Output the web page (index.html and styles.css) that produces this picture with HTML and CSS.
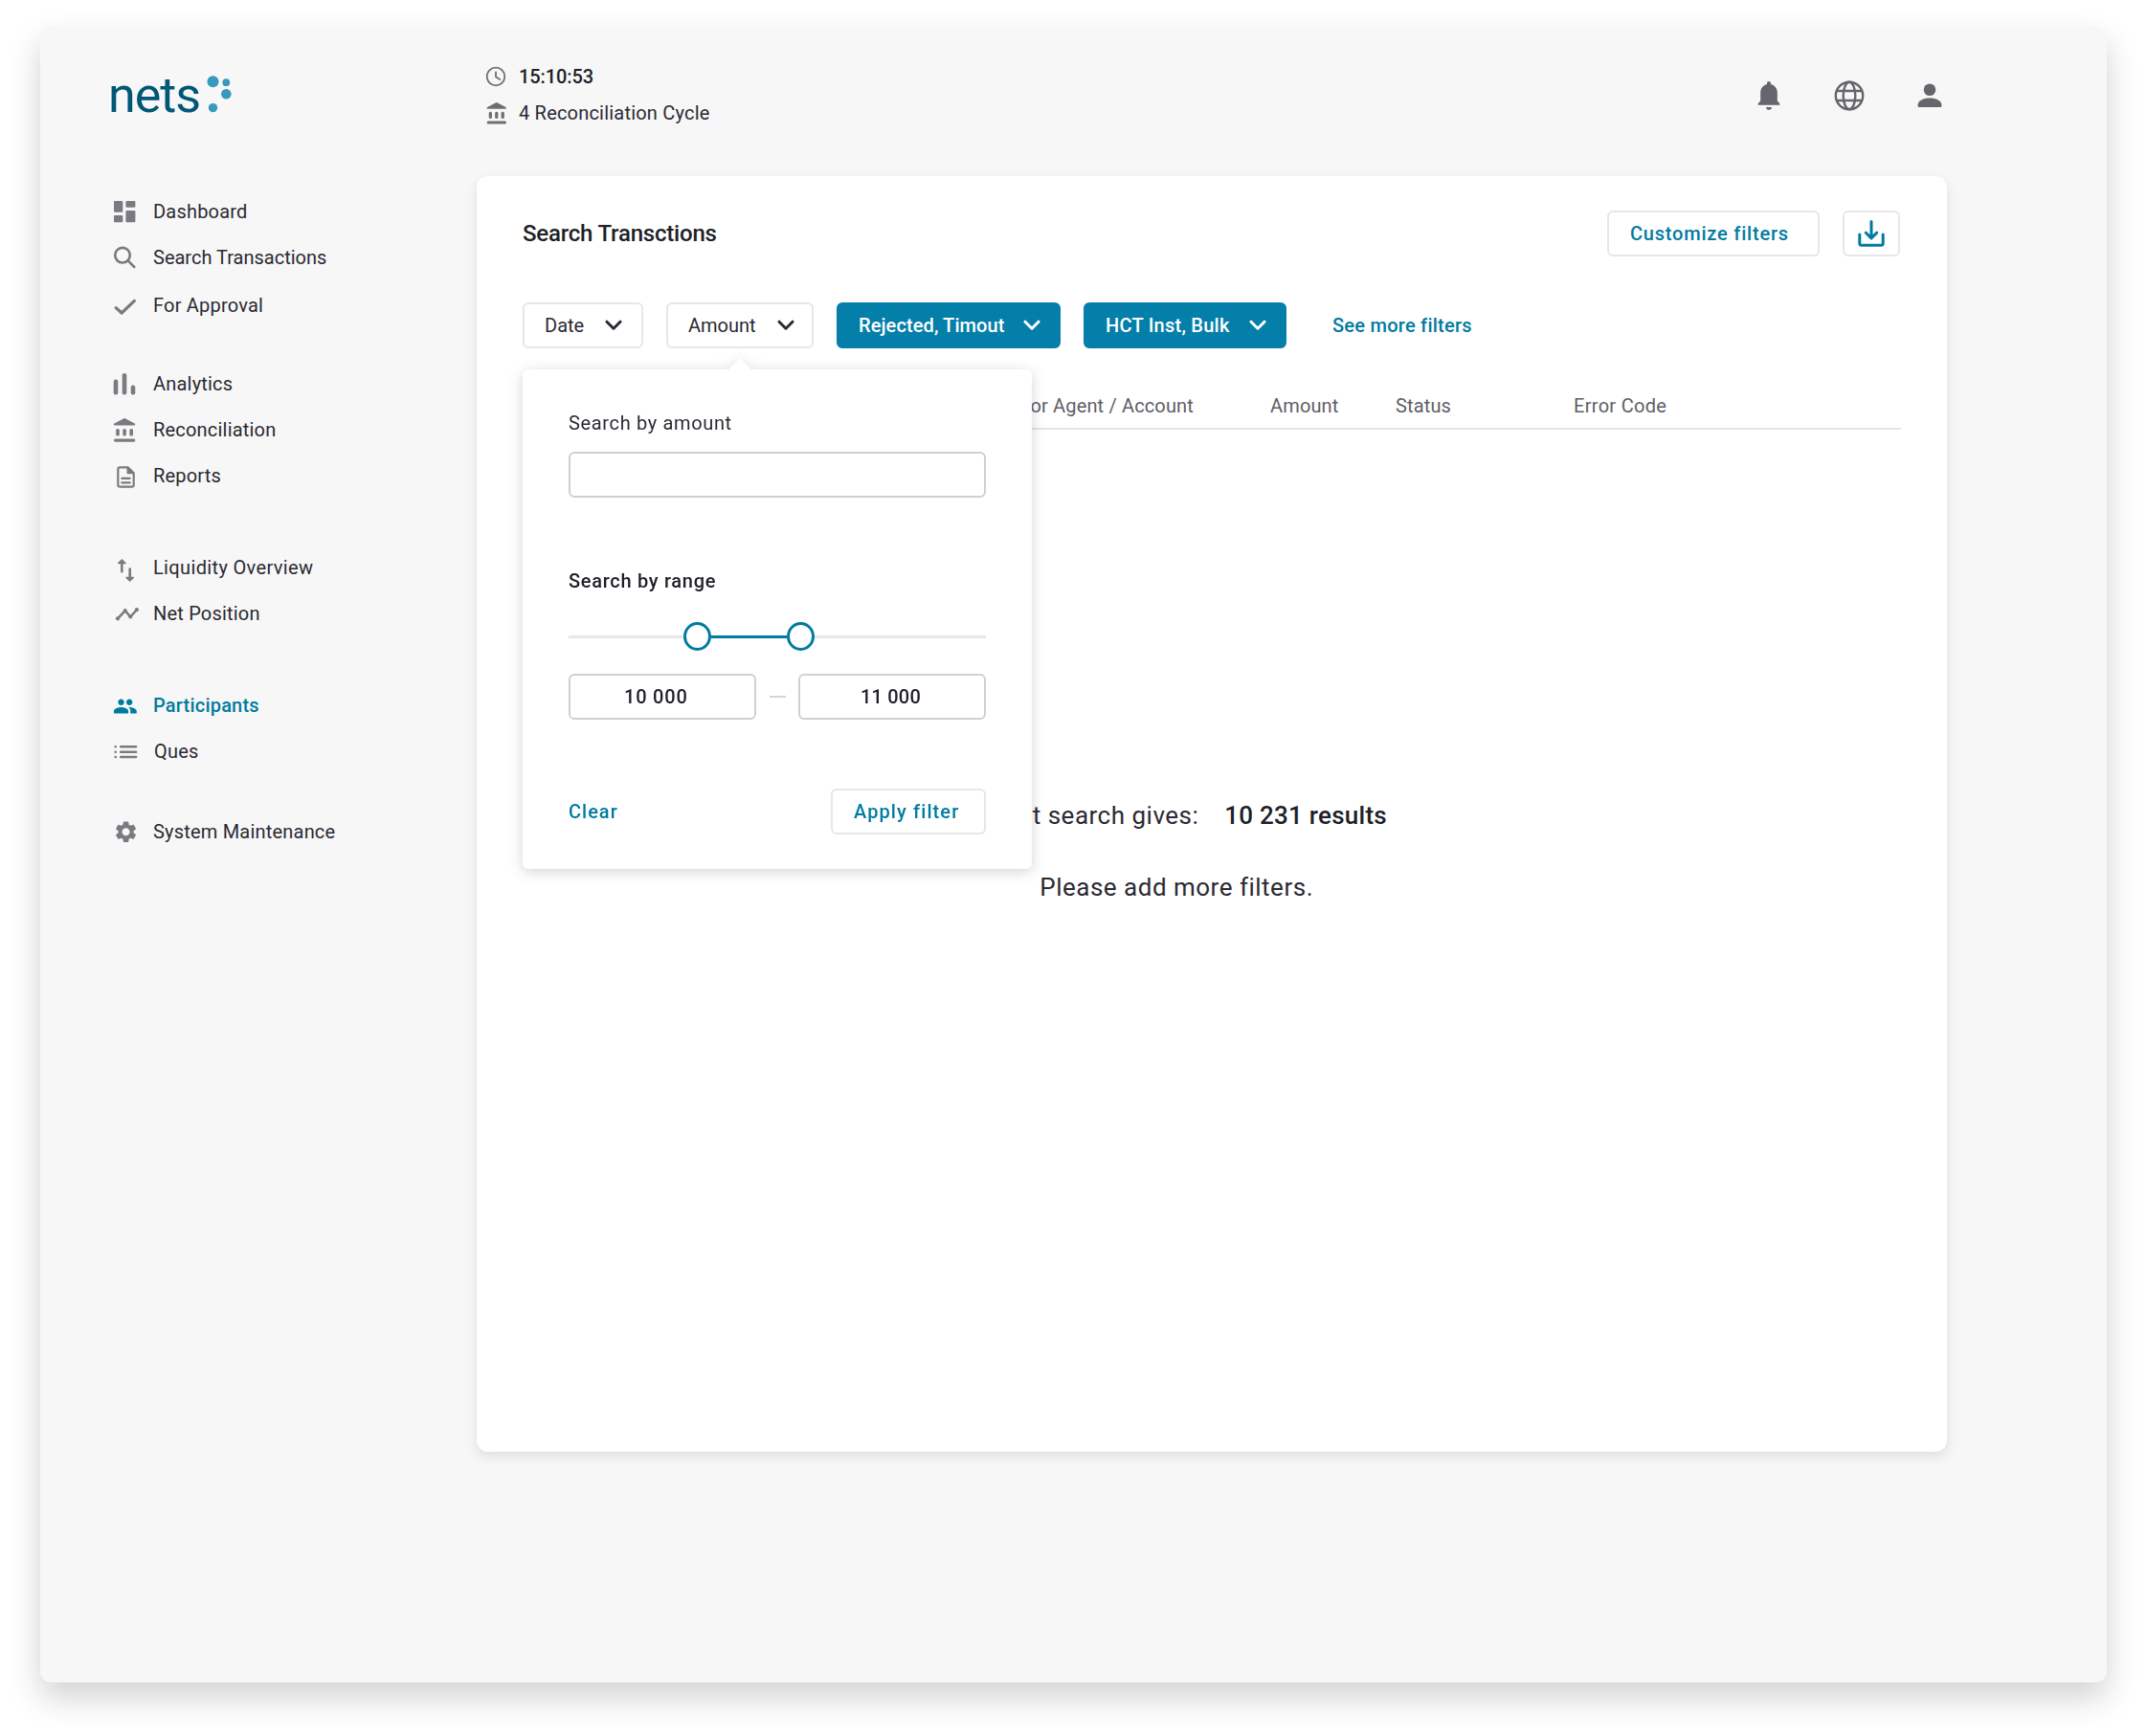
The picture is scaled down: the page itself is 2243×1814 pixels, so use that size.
FILE: index.html
```html
<!DOCTYPE html>
<html lang="en">
<head>
    <meta charset="UTF-8">
    <title>Search Transactions | Nets</title>
    <link rel="stylesheet" href="styles.css">
</head>
<body>
<div class="window">
    <aside class="sidebar">
        <div class="logo">
            <span class="logo-text">nets</span>
            <svg class="logo-dots" width="26" height="40" viewBox="0 0 26 40">
                <circle cx="6.5" cy="6.3" r="6"/>
                <circle cx="20.3" cy="7.2" r="3.9"/>
                <circle cx="20.3" cy="19.2" r="5.3"/>
                <circle cx="6.5" cy="33.6" r="4.7"/>
            </svg>
        </div>

        <nav class="nav">
            <div class="nav-group">
                <a class="nav-item">
                    <svg class="nav-icon" viewBox="0 0 30 30"><rect x="4" y="4" width="9.3" height="11.8" rx="1"/><rect x="16.4" y="4" width="10" height="6.8" rx="1"/><rect x="4" y="19" width="9.3" height="7.3" rx="1"/><rect x="16.4" y="14" width="10" height="12.3" rx="1"/></svg>
                    Dashboard
                </a>
                <a class="nav-item search">
                    <svg class="nav-icon line" viewBox="0 0 30 30"><circle cx="13" cy="12.7" r="7.8"/><path d="M18.7 18.4l6.6 6.6"/></svg>
                    Search Transactions
                </a>
                <a class="nav-item approval">
                    <svg class="nav-icon line thick" viewBox="0 0 30 30"><path d="M6.2 17.6l5.9 5.4L25.4 10.4"/></svg>
                    For Approval
                </a>
            </div>
            <div class="nav-group">
                <a class="nav-item">
                    <svg class="nav-icon" viewBox="0 0 30 30"><rect x="3.7" y="10.6" width="4.6" height="16" rx="2.3"/><rect x="12.7" y="4" width="4.6" height="22.6" rx="2.3"/><rect x="21.7" y="16.5" width="4.6" height="10.1" rx="2.3"/></svg>
                    Analytics
                </a>
                <a class="nav-item">
                    <svg class="nav-icon" viewBox="0 0 30 30"><path d="M14.4 3.3q.7-.4 1.4 0l9.9 5.3c1.1.7.6 2-.5 2H4.9c-1.1 0-1.6-1.3-.5-2z"/><rect x="6.2" y="14" width="3.6" height="7.6" rx="1.7"/><rect x="13.3" y="14" width="3.6" height="7.6" rx="1.7"/><rect x="20.4" y="14" width="3.6" height="7.6" rx="1.7"/><rect x="3.9" y="24.4" width="22.5" height="3.4" rx="1.7"/></svg>
                    Reconciliation
                </a>
                <a class="nav-item">
                    <svg class="nav-icon line thin" viewBox="0 0 30 30"><path d="M10.3 6.4h8.4l6 6v12.3a2 2 0 0 1-2 2H10.3a2 2 0 0 1-2-2V8.4a2 2 0 0 1 2-2zM12.3 17.8h8.4M12.3 22.4h8.4"/><path class="solid" d="M18.2 6.6v6h6z"/></svg>
                    Reports
                </a>
            </div>
            <div class="nav-group">
                <a class="nav-item liquidity">
                    <svg class="nav-icon line" viewBox="0 0 30 30"><path d="M12.3 19.2V8M20.7 16.6v11"/><path class="solid" d="M8.6 10.6l3.7-3.7 3.7 3.7zM17 25.4l3.7 3.7 3.7-3.7z"/></svg>
                    Liquidity Overview
                </a>
                <a class="nav-item">
                    <svg class="nav-icon line" viewBox="0 0 30 30"><path d="M8 20.3l7.7-8.2 5.6 6.4L28 11"/><circle class="dot" cx="8" cy="20.3" r="2.1"/><circle class="dot" cx="15.7" cy="12" r="2"/><circle class="dot" cx="21.3" cy="18.5" r="2"/><circle class="dot" cx="27.9" cy="11.1" r="2.1"/></svg>
                    Net Position
                </a>
            </div>
            <div class="nav-group">
                <a class="nav-item active">
                    <svg class="nav-icon" viewBox="0 0 30 30"><path transform="translate(2.9 3) scale(1.08)" d="M16 11c1.66 0 2.99-1.34 2.99-3S17.66 5 16 5c-1.66 0-3 1.34-3 3s1.34 3 3 3zm-8 0c1.66 0 2.99-1.34 2.99-3S9.66 5 8 5C6.34 5 5 6.34 5 8s1.34 3 3 3zm0 2c-2.33 0-7 1.17-7 3.5V19h14v-2.5c0-2.33-4.67-3.5-7-3.5zm8 0c-.29 0-.62.02-.97.05 1.16.84 1.97 1.97 1.97 3.45V19h6v-2.5c0-2.33-4.67-3.5-7-3.5z"/></svg>
                    Participants
                </a>
                <a class="nav-item ques">
                    <svg class="nav-icon line" viewBox="0 0 30 30"><path d="M11.2 10.3h15.9M11.2 15.7h15.9M11.2 21h15.9M5.7 10.3h.01M5.7 15.7h.01M5.7 21h.01"/></svg>
                    Ques
                </a>
            </div>
            <div class="nav-group">
                <a class="nav-item">
                    <svg class="nav-icon" viewBox="0 0 30 30"><path transform="translate(3.1 1.8) scale(1.12)" d="M19.14 12.94c.04-.3.06-.61.06-.94 0-.32-.02-.64-.07-.94l2.03-1.58c.18-.14.23-.41.12-.61l-1.92-3.32c-.12-.22-.37-.29-.59-.22l-2.39.96c-.5-.38-1.03-.7-1.62-.94l-.36-2.54c-.04-.24-.24-.41-.48-.41h-3.84c-.24 0-.43.17-.47.41l-.36 2.54c-.59.24-1.13.57-1.62.94l-2.39-.96c-.22-.08-.47 0-.59.22L2.74 8.87c-.12.21-.08.47.12.61l2.03 1.58c-.05.3-.09.63-.09.94s.02.64.07.94l-2.03 1.58c-.18.14-.23.41-.12.61l1.92 3.32c.12.22.37.29.59.22l2.39-.96c.5.38 1.03.7 1.62.94l.36 2.54c.05.24.24.41.48.41h3.84c.24 0 .44-.17.47-.41l.36-2.54c.59-.24 1.13-.56 1.62-.94l2.39.96c.22.08.47 0 .59-.22l1.92-3.32c.12-.22.07-.47-.12-.61l-2.01-1.58zM12 15.6c-1.98 0-3.6-1.62-3.6-3.6s1.62-3.6 3.6-3.6 3.6 1.62 3.6 3.6-1.62 3.6-3.6 3.6z"/></svg>
                    System Maintenance
                </a>
            </div>
        </nav>
    </aside>

    <div class="content">
        <header class="topbar">
            <div class="cycle">
                <div class="cycle-row time">
                    <svg class="cycle-icon clock" viewBox="0 0 24 24"><circle cx="12" cy="12" r="9.3"/><path d="M12 7.3v5l4.2 2.8"/></svg>
                    15:10:53
                </div>
                <div class="cycle-row">
                    <svg class="cycle-icon" viewBox="1 2 26.5 26.5"><path d="M14.4 3.3q.7-.4 1.4 0l9.9 5.3c1.1.7.6 2-.5 2H4.9c-1.1 0-1.6-1.3-.5-2z"/><rect x="6.2" y="14" width="3.6" height="8" rx="1.7"/><rect x="13.3" y="14" width="3.6" height="8" rx="1.7"/><rect x="20.4" y="14" width="3.6" height="8" rx="1.7"/><rect x="3.9" y="24.6" width="22.5" height="3.4" rx="1.7"/></svg>
                    4 Reconciliation Cycle
                </div>
            </div>
            <div class="top-icons">
                <svg width="24" height="32" viewBox="0 0 24 32"><path d="M12 1c-1.3 0-2 .9-2 2v1.1C5.7 5.2 3.2 8.7 3.2 13v8.4L.7 24.3v1.5h22.6v-1.5l-2.500-2.900V13c0-4.300-2.500-7.800-6.800-8.900V3c0-1.100-.7-2-2-2z"/><path d="M9 27.900h6c0 1.700-1.300 2.900-3 2.900s-3-1.200-3-2.900z"/></svg>
                <svg class="globe" width="32" height="32" viewBox="0 0 32 32"><circle cx="16" cy="16" r="14.2"/><ellipse cx="16" cy="16" rx="6.3" ry="14.2"/><path d="M3 11h26M3 21h26"/></svg>
                <svg width="26" height="32" viewBox="0 0 26 32"><circle cx="13" cy="9.8" r="6.3"/><path d="M.5 26.2c0-5.3 6-7.8 12.5-7.8s12.5 2.5 12.5 7.8c0 1.100-.6 1.800-1.700 1.800H2.200C1.100 28 .5 27.300.5 26.200z"/></svg>
            </div>
        </header>

        <main class="panel">
            <div class="panel-head">
                <h1 class="panel-title">Search Transctions</h1>
                <div class="panel-actions">
                    <button class="btn customize">Customize filters</button>
                    <button class="btn download">
                        <svg width="28" height="28" viewBox="0 0 28 28"><path d="M14 1.600v17M8.300 13.200l5.700 5.700 5.700-5.700M1.800 15v9.200a2 2 0 0 0 2 2h20.400a2 2 0 0 0 2-2V15"/></svg>
                    </button>
                </div>
            </div>

            <div class="filters">
                <button class="filter">Date <svg class="chevron" viewBox="0 0 18 12"><path d="M2 2.200l7 7 7-7"/></svg></button>
                <div class="filter-wrap">
                    <button class="filter">Amount <svg class="chevron" viewBox="0 0 18 12"><path d="M2 2.200l7 7 7-7"/></svg></button>

                    <!-- Amount dropdown -->
                    <div class="popover">
                        <label class="field-label" for="amount">Search by amount</label>
                        <input class="field" id="amount" type="text">
                        <div class="field-label range-label">Search by range</div>
                        <div class="slider">
                            <span class="track start"></span>
                            <span class="knob"></span>
                            <span class="track selected"></span>
                            <span class="knob"></span>
                            <span class="track end"></span>
                        </div>
                        <div class="range">
                            <input class="field from" type="text" value="10 000">
                            <span class="dash"></span>
                            <input class="field to" type="text" value="11 000">
                        </div>
                        <div class="popover-actions">
                            <a class="clear">Clear</a>
                            <button class="btn apply">Apply filter</button>
                        </div>
                    </div>
                </div>
                <button class="filter selected rejected">Rejected, Timout <svg class="chevron" viewBox="0 0 18 12"><path d="M2 2.200l7 7 7-7"/></svg></button>
                <button class="filter selected hct">HCT Inst, Bulk <svg class="chevron" viewBox="0 0 18 12"><path d="M2 2.200l7 7 7-7"/></svg></button>
                <a class="more">See more filters</a>
            </div>

            <div class="table-head">
                <span class="agent">Creditor Agent / Account</span>
                <span>Amount</span>
                <span>Status</span>
                <span class="error">Error Code</span>
            </div>

            <div class="message">
                <p>Current search gives: <strong>10 231 results</strong></p>
                <p>Please add more filters.</p>
            </div>
        </main>
    </div>
</div>
</body>
</html>
```
FILE: styles.css
```css
* {
    box-sizing: border-box;
}
body {
    margin: 0;
    padding: 28px 42px 56px;
    background-color: #fff;
    font-family: Roboto, "Liberation Sans", sans-serif;
    font-size: 20px;
    line-height: 24px;
    color: #2b2a33;
}
button, input {
    font: inherit;
    color: inherit;
}
svg {
    display: block;
    flex: none;
}
.window {
    display: grid;
    grid-template-columns: 456px 1536px;
    height: 1730px;
    border-radius: 11px;
    background-color: #f7f7f7;
    box-shadow: 0 16px 34px rgba(0, 0, 0, 0.18);
}

/* Sidebar */
.logo {
    display: flex;
    height: 169px;
    padding: 42px 0 0 71px;
}
.logo-text {
    width: 102px;
    font-size: 52px;
    line-height: 60px;
    letter-spacing: -1px;
    color: #005776;
}
.logo-dots {
    margin: 9px 0 0 1px;
    fill: #379aba;
}
.nav {
    padding-left: 73px;
    letter-spacing: 0.2px;
}
.nav-group {
    margin-bottom: 48px;
}
.nav-group:first-child {
    margin-bottom: 34px;
}
.nav-group:nth-child(4) {
    margin-bottom: 36px;
}
.nav-item {
    display: flex;
    align-items: center;
    gap: 15px;
    height: 48px;
    white-space: nowrap;
}
.nav-item.search {
    letter-spacing: 0;
}
.nav-item.approval {
    margin-top: 2px;
}
.nav-item.liquidity {
    letter-spacing: 0.35px;
}
.nav-item.ques {
    gap: 16px;
}
.nav-item.active {
    color: #007b9f;
    font-weight: 500;
}
.nav-icon {
    width: 30px;
    height: 30px;
    fill: #7b7a80;
}
.nav-icon.line {
    fill: none;
    stroke: #7b7a80;
    stroke-width: 2.6;
    stroke-linecap: round;
    stroke-linejoin: round;
}
.nav-icon.thick {
    stroke-width: 3.2;
}
.nav-icon.thin {
    stroke-width: 2.2;
}
.nav-icon .solid {
    fill: #7b7a80;
    stroke-width: 1.4;
}
.nav-icon .dot {
    fill: #7b7a80;
    stroke: none;
}
.active .nav-icon {
    fill: #007b9f;
}

/* Top bar */
.topbar {
    display: flex;
    justify-content: space-between;
    height: 156px;
    padding: 40px 5px 0 8px;
}
.cycle-row {
    display: flex;
    align-items: center;
    gap: 12px;
    height: 24px;
    margin-bottom: 14px;
    letter-spacing: 0.2px;
}
.cycle-row.time {
    color: #201f28;
    font-weight: 500;
    letter-spacing: -0.1px;
}
.cycle-icon {
    width: 24px;
    height: 24px;
    fill: #6f6e75;
}
.cycle-icon.clock {
    fill: none;
    stroke: #6f6e75;
    stroke-width: 1.8;
    stroke-linecap: round;
}
.top-icons {
    display: flex;
    padding-top: 16px;
    fill: #66646c;
}
.top-icons .globe {
    margin: 0 55px 0 56px;
    fill: none;
    stroke: #66646c;
    stroke-width: 2.4;
}

/* Panel */
.panel {
    height: 1333px;
    padding: 36px 48px;
    border-radius: 12px;
    background-color: #fff;
    box-shadow: 0 5px 12px rgba(40, 50, 70, 0.12);
}
.panel-head {
    display: flex;
    justify-content: space-between;
    align-items: center;
    height: 48px;
}
.panel-title {
    margin: 0;
    font-size: 24px;
    font-weight: 500;
    letter-spacing: -0.2px;
    color: #201f28;
}
.panel-actions {
    display: flex;
    gap: 24px;
    margin-right: 1px;
}
.btn {
    height: 48px;
    padding: 0 0 0 22px;
    border: 2px solid #e7e7e9;
    border-radius: 6px;
    background-color: #fff;
    color: #007b9f;
    font-weight: 500;
    text-align: left;
    white-space: nowrap;
}
.customize {
    width: 222px;
    letter-spacing: 0.8px;
}
.download {
    width: 60px;
    padding: 0 14px;
}
.download svg {
    fill: none;
    stroke: #007b9f;
    stroke-width: 3;
    stroke-linecap: round;
    stroke-linejoin: round;
}

.filters {
    display: flex;
    align-items: center;
    gap: 24px;
    margin-top: 48px;
}
.filter-wrap {
    position: relative;
}
.filter {
    display: flex;
    align-items: center;
    gap: 22px;
    width: 126px;
    height: 48px;
    padding: 0 0 0 21px;
    border: 2px solid #e7e7e9;
    border-radius: 6px;
    background-color: #fff;
    white-space: nowrap;
}
.filter-wrap .filter {
    width: 154px;
}
.filter.selected {
    border-color: #047fa9;
    background-color: #047fa9;
    color: #fff;
    font-weight: 500;
}
.filter.rejected {
    width: 234px;
    gap: 19px;
    letter-spacing: 0.1px;
}
.filter.hct {
    width: 212px;
    gap: 20px;
    letter-spacing: 0.25px;
}
.chevron {
    width: 18px;
    height: 12px;
    fill: none;
    stroke: currentColor;
    stroke-width: 3;
    stroke-linecap: round;
    stroke-linejoin: round;
}
.more {
    margin-left: 24px;
    color: #007b9f;
    font-weight: 500;
    letter-spacing: 0.25px;
}

/* Amount dropdown */
.popover {
    position: absolute;
    top: 70px;
    left: -150px;
    width: 532px;
    height: 522px;
    padding: 44px 48px 0;
    border-radius: 6px;
    background-color: #fff;
    filter: drop-shadow(0 3px 7px rgba(30, 40, 50, 0.2));
}
.popover::before {
    content: "";
    position: absolute;
    top: -12px;
    left: 214px;
    border: 13px solid transparent;
    border-top: 0;
    border-bottom: 13px solid #fff;
}
.field-label {
    display: block;
    letter-spacing: 0.65px;
}
.field {
    display: block;
    width: 436px;
    height: 48px;
    margin-top: 18px;
    padding: 0;
    border: 2px solid #cfd0d4;
    border-radius: 6px;
    background-color: #fff;
}
.range-label {
    margin-top: 75px;
    color: #201f28;
    font-weight: 500;
    letter-spacing: 0.7px;
}
.slider {
    display: flex;
    align-items: center;
    margin-top: 31px;
}
.track {
    height: 3px;
    background-color: #e6e9ea;
}
.track.start {
    width: 120px;
}
.track.selected {
    width: 79px;
    background-color: #007b9f;
}
.track.end {
    flex: 1;
}
.knob {
    width: 29px;
    height: 30px;
    border: 3px solid #007b9f;
    border-radius: 50%;
    background-color: #fff;
}
.range {
    display: flex;
    align-items: center;
    justify-content: space-between;
    margin-top: 24px;
}
.range .field {
    width: 196px;
    margin: 0;
    padding-left: 56px;
    color: #201f28;
    font-weight: 500;
    letter-spacing: 0.8px;
}
.range .to {
    padding-left: 63px;
    letter-spacing: 0.2px;
}
.dash {
    width: 17px;
    height: 2px;
    background-color: #d3d4d8;
}
.popover-actions {
    display: flex;
    align-items: center;
    justify-content: space-between;
    margin-top: 72px;
}
.clear {
    color: #007b9f;
    font-weight: 500;
    letter-spacing: 1px;
}
.apply {
    width: 162px;
    letter-spacing: 1.1px;
}

/* Results */
.table-head {
    display: grid;
    grid-template-columns: 701px 130px 186px 1fr;
    margin-top: 48px;
    padding-bottom: 11px;
    border-bottom: 2px solid #e3e4e6;
    color: #5f5e67;
    letter-spacing: 0.15px;
}
.table-head .agent {
    text-align: right;
    white-space: nowrap;
}
.table-head span:nth-child(2) {
    padding-left: 80px;
    margin-right: -80px;
}
.table-head span:nth-child(3) {
    padding-left: 81px;
}
.table-head .error {
    padding-left: 81px;
    letter-spacing: 0.3px;
}
.message {
    width: 903px;
    margin-top: 388px;
    font-size: 26px;
    line-height: 30px;
    letter-spacing: 0.5px;
}
.message p {
    margin: 0 0 45px;
    text-align: right;
}
.message p + p {
    width: 826px;
}
.message strong {
    margin-left: 20px;
    color: #201f28;
    font-weight: 500;
    letter-spacing: 0.25px;
}
```
